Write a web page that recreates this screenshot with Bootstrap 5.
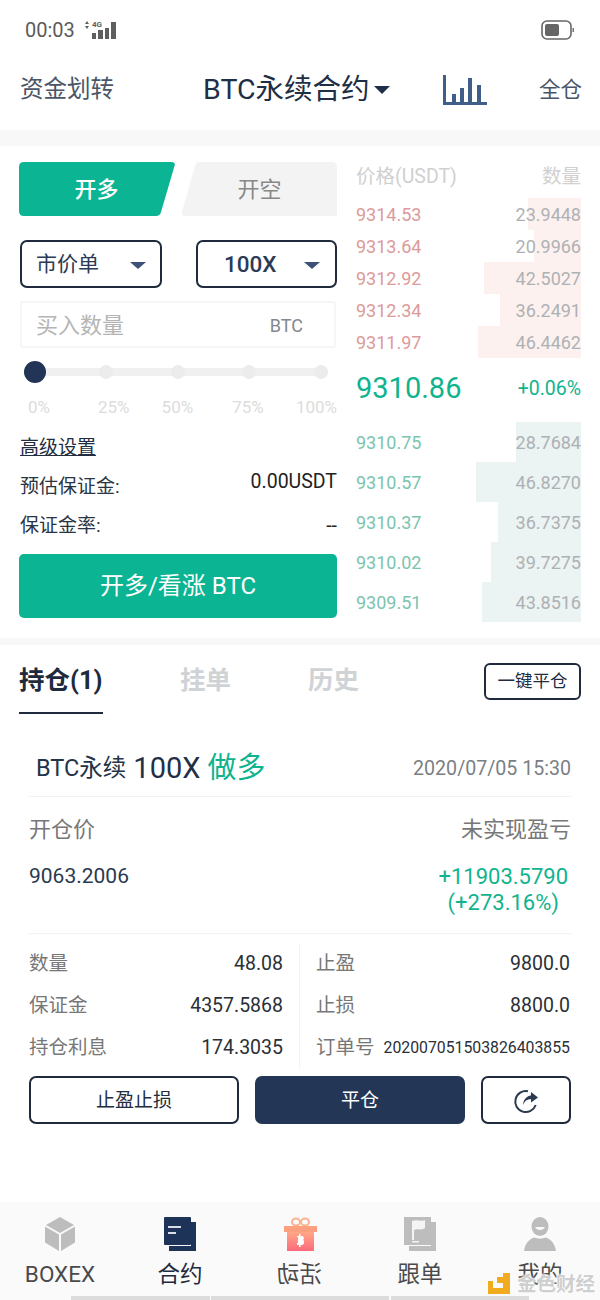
<!DOCTYPE html>
<html lang="zh">
<head>
  <meta charset="UTF-8" />
  <link rel="stylesheet" href="https://cdn.jsdelivr.net/npm/bootstrap@5.3.3/dist/css/bootstrap.min.css">
  <script src="https://cdn.jsdelivr.net/npm/bootstrap@5.3.3/dist/js/bootstrap.bundle.min.js"></script>
  <title>BTC永续合约</title>
  <style>
    body {
      width: 600px;
      height: 1300px;
      overflow: hidden;
      background: #fff;
      font-family: Roboto, "Noto Sans CJK SC", sans-serif;
      color: #1f2f4a;
      position: relative;
    }
    .status-bar { height: 60px; padding: 0 25px 0 25px; color: #5a5a5a; font-size: 20px; }
    .top-bar { height: 70px; padding: 0 18px 10px 20px; }
    .top-side { font-size: 23.5px; color: #4a5568; line-height: 1; }
    .top-side-sm { font-size: 21.5px; }
    .top-title { font-size: 28.5px; color: #1f2f45; line-height: 1; margin-left: 89px; }
    .caret-down { width: 0; height: 0; border-left: 8px solid transparent; border-right: 8px solid transparent; border-top: 8px solid #1f2f4a; }
    .band { background: #f8f8f8; }
    .band-top { height: 16px; }
    .band-mid { height: 7px; }

    .trade { height: 492px; padding: 16px 19px 0 19px; }
    .trade-left { width: 318px; }
    .trade-right { width: 225px; margin-left: 19px; }
    .side-tabs { height: 54px; }
    .side-tab { width: 156px; height: 54px; font-size: 22px; }
    .side-buy { background: #0bb493; color: #fff; font-weight: 500; clip-path: path("M5 0H152Q157 0 155.500 4L142 50Q141 54 137 54H5Q0 54 0 49V5Q0 0 5 0Z"); padding-right: 1px; }
    .side-sell { background: #f3f3f3; color: #888; clip-path: path("M18 0H151Q156 0 156 5V54H4Q0 54 1 50L14 4Q15 0 18 0Z"); padding-left: 1px; }
    .pick { height: 48px; border: 2px solid #1f2a3d; border-radius: 7px; font-size: 21px; color: #2b3a55; background: #fff; }
    .pick-a { width: 142px; margin-left: 1px; padding: 2px 14px 0 14px; }
    .pick-b { width: 141px; padding: 2px 15px 0 26px; font-size: 22.5px; font-weight: 500; }
    .pick-caret { width: 0; height: 0; border-left: 8px solid transparent; border-right: 8px solid transparent; border-top: 7px solid #3f5179; }
    .qty-box { height: 47px; margin: 13px 1px 0 1px; border: 2px solid #f6f6f6; border-radius: 3px; padding: 2px 31px 0 14px; }
    .qty-hint { font-size: 22px; color: #b5b5b5; }
    .qty-unit { font-size: 18px; color: #83888f; }
    .slide-track { height: 8px; margin: 20px 9px 0 11px; background: #f0f0f0; border-radius: 4px; }
    .slide-knob { width: 22px; height: 22px; border-radius: 50%; background: #223556; margin-left: -6px; flex: none; }
    .slide-dot { width: 14px; height: 14px; border-radius: 50%; background: #ececec; flex: none; margin-left: 58px; }
    .slide-dot:nth-child(2) { margin-left: 53px; }
    .slide-dot:nth-child(4) { margin-left: 57px; }
    .slide-labels { margin: 23px 0 0 9px; font-size: 17px; color: #dcdcdc; line-height: 1; }
    .slide-labels span:nth-child(2) { margin-left: 48px; }
    .slide-labels span:nth-child(3) { margin-left: 32px; }
    .slide-labels span:nth-child(4) { margin-left: 39px; }
    .slide-labels span:nth-child(5) { margin-left: auto; }
    .adv-link { font-size: 19px; color: #222d3f; text-decoration: underline; line-height: 1; margin: 22px 0 0 1px; }
    .info-row { font-size: 19px; color: #2a3442; line-height: 1; margin-left: 1px; }
    .info-val { font-size: 19.5px; color: #222; }
    .info-val-up { margin-top: -5px; }
    .open-btn { height: 64px; width: 318px; background: #0bb493; border-radius: 5px; color: #fff; font-size: 24px; margin-top: 18px; }

    .book-head { font-size: 19.5px; color: #d0d0d0; height: 36px; padding-top: 2px; line-height: 26px; }
    .book-row { font-size: 18px; background-repeat: no-repeat; background-position: right top; }
    .book-ask { height: 32px; background-image: linear-gradient(#fdf1ef, #fdf1ef); }
    .book-bid { height: 40px; background-image: linear-gradient(#ebf3f3, #ebf3f3); }
    .ask-price { color: #dd9a9a; }
    .bid-price { color: #7cc4ae; }
    .book-qty { color: #aeb1b4; }
    .book-mid { height: 64px; padding-bottom: 2px; color: #0fb48e; }
    .mid-price { font-size: 29px; }
    .mid-pct { font-size: 19.5px; }

    .pos-tabs { height: 69px; padding: 0 19px 0 19px; }
    .pos-tab { font-size: 25.5px; font-weight: 700; color: #d0d3d6; line-height: 1; }
    .pos-tab-on { color: #1f2a3d; width: 84px; height: 69px; border-bottom: 2px solid #1f2a3d; padding-top: 23px; white-space: nowrap; }
    .close-all { width: 97px; height: 37px; border: 2px solid #1f2a3d; border-radius: 6px; font-size: 17.5px; color: #222d3f; background: #fff; }

    .pos-card { padding: 0 29px; }
    .pos-title { height: 83px; padding: 28px 0 0 7px; border-bottom: 1px solid #f3f3f3; }
    .pos-name { font-size: 23.5px; color: #243347; }
    .pos-lev { font-size: 29px; color: #1f3047; margin-left: 7px; }
    .pos-dir { font-size: 29px; color: #0fb48e; margin-left: 7px; }
    .pos-time { font-size: 19.6px; color: #7b7f85; margin-left: auto; }
    .pnl-wrap { height: 137px; border-bottom: 1px solid #f3f3f3; padding-top: 17px; }
    .pnl-label { font-size: 22px; color: #777; line-height: 32px; }
    .pnl-open { font-size: 21px; color: #2a3a4f; margin-top: 17px; line-height: 26px; }
    .pnl-gain { font-size: 22px; color: #0fb48e; text-align: right; line-height: 26px; margin: 18px 3px 0 0; }
    .stat-grid { padding-top: 9px; height: 142px; }
    .stat-col { width: 254px; }
    .stat-sep { width: 1px; background: #f3f3f3; margin: 0 16px; height: 126px; }
    .stat-row { height: 42px; font-size: 19.5px; color: #2a2f38; }
    .stat-key { color: #777; }
    .stat-order { font-size: 15.8px; }
    .act-btn { height: 48px; border: 2px solid #1f2a3d; border-radius: 7px; font-size: 19px; color: #222d3f; background: #fff; }
    .act-text { padding-top: 2px !important; }
    .act-a { width: 210px; }
    .act-b { width: 210px; background: #243656; border-color: #243656; color: #fff; }
    .act-c { width: 90px; }

    .tab-bar { height: 98px; margin-top: 78px; background: #fafafa; padding-top: 15px; }
    .tab-item { width: 120px; height: 83px; }
    .tab-icon { height: 34px; }
    .tab-name { font-size: 22.5px; color: #4a4a4a; line-height: 1; margin-top: 12px; }
    .tab-on { color: #1f2a3d; }
    .tab-flip { display: inline-block; transform: scaleX(-1); }
    .home-line { position: absolute; left: 71px; top: 1296px; width: 458px; height: 4px; }
    .home-seg { background: #dcdcdc; }
    .mark-badge { position: absolute; left: 488px; top: 1273px; font-size: 19.5px; font-weight: 700; color: #cfcfcf; text-shadow: 0 0 2px #fff, 0 0 2px #fff, 0 0 3px #fff; line-height: 1; white-space: nowrap; }
  </style>
</head>
<body>
  <!-- status bar -->
  <div class="status-bar d-flex align-items-center justify-content-between">
    <div class="d-flex align-items-center gap-2">
      <span>00:03</span>
      <svg width="34" height="20" viewBox="0 0 34 20" fill="#5f5f5f">
        <path d="M2 4l2-3 2 3zM2 6l2 3 2-3z"/>
        <rect x="9" y="13" width="4" height="6"/><rect x="15" y="10" width="5" height="9"/>
        <rect x="22" y="8" width="4" height="11"/><rect x="28" y="2" width="5" height="17"/>
        <text x="9" y="7" font-size="8" font-family="Roboto" font-weight="700">4G</text>
      </svg>
    </div>
    <svg width="34" height="20" viewBox="0 0 34 20">
      <rect x="1" y="1" width="29" height="18" rx="5" fill="none" stroke="#666" stroke-width="1.6"/>
      <rect x="4" y="4" width="14" height="12" rx="2" fill="#666"/>
      <rect x="31.5" y="8" width="1.5" height="4" fill="#777"/>
    </svg>
  </div>

  <!-- top bar -->
  <div class="top-bar d-flex align-items-center">
    <span class="top-side">资金划转</span>
    <span class="top-title">BTC永续合约</span>
    <span class="caret-down ms-1"></span>
    <svg class="ms-auto" style="margin-right:52px" width="44" height="30" viewBox="0 0 44 30" fill="#3f5f8a">
      <rect x="0" y="0" width="3" height="30"/><rect x="0" y="27" width="44" height="3"/>
      <rect x="9" y="19" width="4" height="9"/><rect x="17" y="13" width="4" height="15"/>
      <rect x="25" y="3" width="4" height="25"/><rect x="34" y="10" width="4" height="18"/>
    </svg>
    <span class="top-side top-side-sm">全仓</span>
  </div>
  <div class="band band-top"></div>

  <!-- trade form + order book -->
  <div class="trade d-flex">
    <div class="trade-left">
      <div class="side-tabs d-flex gap-1 justify-content-between">
        <div class="side-tab side-buy d-flex align-items-center justify-content-center">开多</div>
        <div class="side-tab side-sell d-flex align-items-center justify-content-center">开空</div>
      </div>
      <div class="d-flex justify-content-between" style="margin-top:24px">
        <div class="pick pick-a d-flex align-items-center justify-content-between"><span>市价单</span><span class="pick-caret"></span></div>
        <div class="pick pick-b d-flex align-items-center justify-content-between"><span>100X</span><span class="pick-caret"></span></div>
      </div>
      <div class="qty-box d-flex align-items-center justify-content-between">
        <span class="qty-hint">买入数量</span><span class="qty-unit">BTC</span>
      </div>
      <div class="slide-track d-flex align-items-center">
        <span class="slide-knob"></span><span class="slide-dot"></span><span class="slide-dot"></span><span class="slide-dot"></span><span class="slide-dot"></span>
      </div>
      <div class="slide-labels d-flex">
        <span>0%</span><span>25%</span><span>50%</span><span>75%</span><span>100%</span>
      </div>
      <div class="adv-link">高级设置</div>
      <div class="info-row d-flex justify-content-between align-items-start" style="margin-top:20px">
        <span>预估保证金:</span><span class="info-val info-val-up">0.00USDT</span>
      </div>
      <div class="info-row d-flex justify-content-between align-items-center" style="margin-top:20px">
        <span>保证金率:</span><span class="info-val">--</span>
      </div>
      <div class="open-btn d-flex align-items-center justify-content-center">开多/看涨 BTC</div>
    </div>

    <div class="trade-right">
      <div class="book-head d-flex justify-content-between"><span>价格(USDT)</span><span>数量</span></div>
      <div class="book-row book-ask d-flex align-items-center justify-content-between" style="background-size:53px 100%"><span class="ask-price">9314.53</span><span class="book-qty">23.9448</span></div>
      <div class="book-row book-ask d-flex align-items-center justify-content-between" style="background-size:47px 100%"><span class="ask-price">9313.64</span><span class="book-qty">20.9966</span></div>
      <div class="book-row book-ask d-flex align-items-center justify-content-between" style="background-size:97px 100%"><span class="ask-price">9312.92</span><span class="book-qty">42.5027</span></div>
      <div class="book-row book-ask d-flex align-items-center justify-content-between" style="background-size:81px 100%"><span class="ask-price">9312.34</span><span class="book-qty">36.2491</span></div>
      <div class="book-row book-ask d-flex align-items-center justify-content-between" style="background-size:103px 100%"><span class="ask-price">9311.97</span><span class="book-qty">46.4462</span></div>
      <div class="book-mid d-flex align-items-center justify-content-between"><span class="mid-price">9310.86</span><span class="mid-pct">+0.06%</span></div>
      <div class="book-row book-bid d-flex align-items-center justify-content-between" style="background-size:65px 100%"><span class="bid-price">9310.75</span><span class="book-qty">28.7684</span></div>
      <div class="book-row book-bid d-flex align-items-center justify-content-between" style="background-size:105px 100%"><span class="bid-price">9310.57</span><span class="book-qty">46.8270</span></div>
      <div class="book-row book-bid d-flex align-items-center justify-content-between" style="background-size:83px 100%"><span class="bid-price">9310.37</span><span class="book-qty">36.7375</span></div>
      <div class="book-row book-bid d-flex align-items-center justify-content-between" style="background-size:90px 100%"><span class="bid-price">9310.02</span><span class="book-qty">39.7275</span></div>
      <div class="book-row book-bid d-flex align-items-center justify-content-between" style="background-size:99px 100%"><span class="bid-price">9309.51</span><span class="book-qty">43.8516</span></div>
    </div>
  </div>
  <div class="band band-mid"></div>

  <!-- position tabs -->
  <div class="pos-tabs d-flex align-items-start">
    <div class="pos-tab pos-tab-on">持仓(1)</div>
    <div class="pos-tab" style="margin:23px 0 0 77px">挂单</div>
    <div class="pos-tab" style="margin:23px 0 0 77px">历史</div>
    <button class="close-all ms-auto p-0" style="margin-top:18px">一键平仓</button>
  </div>

  <!-- position card -->
  <div class="pos-card">
    <div class="pos-title d-flex align-items-center">
      <span class="pos-name">BTC永续</span><span class="pos-lev">100X</span><span class="pos-dir">做多</span>
      <span class="pos-time">2020/07/05 15:30</span>
    </div>
    <div class="pnl-wrap d-flex justify-content-between">
      <div>
        <div class="pnl-label">开仓价</div>
        <div class="pnl-open">9063.2006</div>
      </div>
      <div class="text-end">
        <div class="pnl-label">未实现盈亏</div>
        <div class="pnl-gain">+11903.5790<br><span style="margin-right:9px">(+273.16%)</span></div>
      </div>
    </div>
    <div class="stat-grid d-flex">
      <div class="stat-col">
        <div class="stat-row d-flex align-items-center justify-content-between"><span class="stat-key">数量</span><span>48.08</span></div>
        <div class="stat-row d-flex align-items-center justify-content-between"><span class="stat-key">保证金</span><span>4357.5868</span></div>
        <div class="stat-row d-flex align-items-center justify-content-between"><span class="stat-key">持仓利息</span><span>174.3035</span></div>
      </div>
      <div class="stat-sep"></div>
      <div class="stat-col">
        <div class="stat-row d-flex align-items-center justify-content-between"><span class="stat-key">止盈</span><span>9800.0</span></div>
        <div class="stat-row d-flex align-items-center justify-content-between"><span class="stat-key">止损</span><span>8800.0</span></div>
        <div class="stat-row d-flex align-items-center justify-content-between"><span class="stat-key">订单号</span><span class="stat-order">202007051503826403855</span></div>
      </div>
    </div>
    <div class="d-flex justify-content-between">
      <button class="act-btn act-a p-0 act-text">止盈止损</button>
      <button class="act-btn act-b p-0 act-text">平仓</button>
      <button class="act-btn act-c p-0">
        <svg width="26" height="26" viewBox="0 0 26 26" fill="none">
          <path d="M15 3.300A10.500 10.500 0 1 0 22.700 17" stroke="#2c3a4f" stroke-width="2"/>
          <path d="M10 17C10.500 11 14 8 18 7.500V4l7 5.500-7 5v-3.500C14 11 11.500 13 10 17z" fill="#2c3a4f"/>
        </svg>
      </button>
    </div>
  </div>

  <!-- bottom tabs -->
  <div class="tab-bar d-flex">
    <div class="tab-item d-flex flex-column align-items-center">
      <div class="tab-icon">
        <svg width="30" height="34" viewBox="0 0 30 34">
          <path d="M15 0L29 8 15 16 1 8z" fill="#bdbdbd"/>
          <path d="M0 9.500l14 8V34L0 25.500z" fill="#bdbdbd"/><path d="M30 9.500l-14 8V34l14-8.500z" fill="#bdbdbd"/>
        </svg>
      </div>
      <div class="tab-name">BOXEX</div>
    </div>
    <div class="tab-item d-flex flex-column align-items-center">
      <div class="tab-icon">
        <svg width="32" height="34" viewBox="0 0 32 34">
          <path d="M27 5h5v29H5v-5h22z" fill="#1d3358"/>
          <rect width="27" height="28" rx="1" fill="#1d3358"/>
          <rect x="4" y="9" width="13" height="2" fill="#d8dee8"/><rect x="4" y="15" width="8" height="2" fill="#d8dee8"/>
        </svg>
      </div>
      <div class="tab-name tab-on">合约</div>
    </div>
    <div class="tab-item d-flex flex-column align-items-center">
      <div class="tab-icon">
        <svg width="33" height="34" viewBox="0 0 33 34">
          <defs><linearGradient id="giftFill" x1="0" y1="0" x2="0" y2="1"><stop offset="0" stop-color="#ffa887"/><stop offset="1" stop-color="#fb6a7c"/></linearGradient></defs>
          <ellipse cx="12" cy="5" rx="4" ry="3.500" fill="none" stroke="#f9b48f" stroke-width="2"/>
          <ellipse cx="21" cy="5" rx="4" ry="3.500" fill="none" stroke="#f9b48f" stroke-width="2"/>
          <rect y="9" width="33" height="6" fill="#fda07f"/>
          <rect x="3" y="15" width="27" height="19" fill="url(#giftFill)"/>
          <path d="M15 17h1.500v2h1.500c2 0 2.500 3 1 4 2 1 1 5-1 5h-1.500v2H15v-2h-2v-2h1v-6h-1v-1h2z" fill="#fff"/>
        </svg>
      </div>
      <div class="tab-name"><span class="tab-flip">活动</span></div>
    </div>
    <div class="tab-item d-flex flex-column align-items-center">
      <div class="tab-icon">
        <svg width="32" height="34" viewBox="0 0 32 34">
          <path d="M27 5h5v29H5v-5h22z" fill="#bdbdbd"/>
          <rect width="27" height="28" fill="#bdbdbd"/>
          <path d="M8 4v19h2V13c3-2 7 1 11-2V3c-4 2-8-1-13 1z" fill="#f4f4f4"/>
          <rect x="8" y="24" width="7" height="1.500" fill="#f4f4f4"/>
        </svg>
      </div>
      <div class="tab-name">跟单</div>
    </div>
    <div class="tab-item d-flex flex-column align-items-center">
      <div class="tab-icon">
        <svg width="32" height="34" viewBox="0 0 32 34">
          <ellipse cx="16" cy="9.500" rx="8.500" ry="9.500" fill="#bdbdbd"/>
          <path d="M11 10c2 4 8 4 10 0z" fill="#fafafa"/>
          <path d="M0 34c1-8 6-12 10-13.500 4 1.500 8 1.500 12 0 4 1.500 9 5.500 10 13.500z" fill="#bdbdbd"/>
        </svg>
      </div>
      <div class="tab-name">我的</div>
    </div>
  </div>

  <div class="home-line d-flex gap-0">
    <span class="home-seg" style="width:139px"></span>
    <span class="home-seg" style="width:178px;margin-left:1px"></span>
    <span class="home-seg" style="width:138px;margin-left:2px"></span>
  </div>
  <!-- watermark over the last tab -->
  <div class="mark-badge d-flex align-items-end">
    <svg width="22" height="21" viewBox="0 0 22 21" fill="#f0ab1e">
      <path d="M15 0h7v21H0v-6h15z"/>
      <rect x="0" y="8" width="5" height="7"/>
      <rect x="9" y="4" width="6" height="6"/>
    </svg>
    <span style="margin-left:7px">金色财经</span>
  </div>
</body>
</html>
